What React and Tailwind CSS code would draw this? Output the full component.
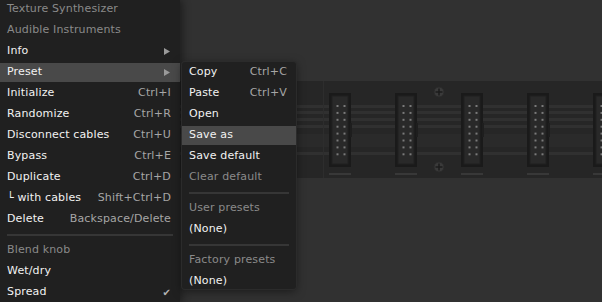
import React from "react";

const FONT = { fontFamily: '"DejaVu Sans", "Liberation Sans", sans-serif' };

const MAIN_ITEMS = [
  { label: "Texture Synthesizer", dim: true },
  { label: "Audible Instruments", dim: true },
  { label: "Info", arrow: true },
  { label: "Preset", arrow: true, active: true },
  { label: "Initialize", key: "Ctrl+I" },
  { label: "Randomize", key: "Ctrl+R" },
  { label: "Disconnect cables", key: "Ctrl+U" },
  { label: "Bypass", key: "Ctrl+E" },
  { label: "Duplicate", key: "Ctrl+D" },
  { label: "└ with cables", key: "Shift+Ctrl+D" },
  { label: "Delete", key: "Backspace/Delete" },
  { sep: true },
  { label: "Blend knob", dim: true },
  { label: "Wet/dry" },
  { label: "Spread", check: true },
];

const PRESET_ITEMS = [
  { label: "Copy", key: "Ctrl+C" },
  { label: "Paste", key: "Ctrl+V" },
  { label: "Open" },
  { label: "Save as", active: true },
  { label: "Save default" },
  { label: "Clear default", dim: true },
  { sep: true },
  { label: "User presets", dim: true },
  { label: "(None)" },
  { sep: true },
  { label: "Factory presets", dim: true },
  { label: "(None)" },
];

function Arrow() {
  return (
    <svg width="6" height="7" viewBox="0 0 6 7" className="mr-[1px]">
      <polygon points="0,0 6,3.5 0,7" fill="#9a9a9a" />
    </svg>
  );
}

function MenuRow({ item }) {
  if (item.sep) {
    return (
      <div className="h-[10px] flex items-center px-[7px]">
        <div className="h-[2px] w-full bg-[#363636]" />
      </div>
    );
  }
  return (
    <div className="h-[21px] py-[1px]">
      <div
        className={`h-full flex items-center justify-between pl-[7px] pr-[9px] ${
          item.active ? "bg-[#494949]" : ""
        }`}
      >
        <span className={item.dim ? "text-[#8a8a8a]" : "text-[#f2f2f2]"}>{item.label}</span>
        {item.key && <span className="text-[#a6a6a6]">{item.key}</span>}
        {item.arrow && <Arrow />}
        {item.check && <span className="text-[#b4b4b4] text-[10px]">✔</span>}
      </div>
    </div>
  );
}

function Connector({ x }) {
  const pins = [];
  for (let i = 0; i < 8; i++) {
    const y = 24 + i * 6.9;
    pins.push(<rect key={`a${i}`} x={x + 7.5} y={y} width="2" height="2" fill="#7a7a7a" />);
    pins.push(<rect key={`b${i}`} x={x + 14.5} y={y} width="2" height="2" fill="#7a7a7a" />);
  }
  return (
    <g>
      <rect x={x} y="12" width="22" height="74" fill="#1a1a1a" />
      <rect x={x + 3} y="15" width="16" height="68" fill="#292929" stroke="#202020" strokeWidth="1" />
      <rect x={x + 21} y="42" width="2" height="14" fill="#1e1e1e" />
      {pins}
      <rect x={x} y="92" width="22" height="2" fill="#383838" />
    </g>
  );
}

function Screw({ y }) {
  return (
    <g>
      <circle cx="439" cy={y} r="5" fill="#3a3a3a" stroke="#2a2a2a" />
      <rect x="435.5" y={y - 0.75} width="7" height="1.5" fill="#1c1c1c" />
      <rect x="438.25" y={y - 3.5} width="1.5" height="7" fill="#1c1c1c" />
    </g>
  );
}

function RackStrip() {
  return (
    <svg width="602" height="97" viewBox="0 0 602 97" className="block">
      <rect width="602" height="97" fill="#262626" />
      <rect y="53" width="602" height="13" fill="#2a2a2a" />
      {[24, 30, 37, 44, 71].map((y) => (
        <rect key={y} y={y} width="602" height="3" fill="#303030" />
      ))}
      <rect x="323" width="1" height="97" fill="#2d2d2d" />
      {[329, 395, 461, 527, 593].map((x) => (
        <Connector key={x} x={x} />
      ))}
      <Screw y={11} />
      <Screw y={86} />
    </svg>
  );
}

export default function App() {
  return (
    <div
      className="relative w-[602px] h-[302px] overflow-hidden bg-[#313131] text-[11px] tracking-[0.15px]"
      style={FONT}
    >
      <div className="pt-[81px]">
        <RackStrip />
      </div>

      <div className="absolute left-0 top-0 bottom-0 w-[180px] bg-[#202020] shadow-[2px_0_8px_rgba(0,0,0,0.45)]">
        <div className="mt-[-1px] flex flex-col">
          {MAIN_ITEMS.map((item, i) => (
            <MenuRow key={i} item={item} />
          ))}
        </div>
      </div>

      <div className="absolute left-[182px] top-[62px] w-[114px] h-[227px] overflow-hidden rounded-[3px] bg-[#202020] ring-1 ring-[#2b2b2b] shadow-[0_2px_10px_rgba(0,0,0,0.5)]">
        <div className="flex flex-col">
          {PRESET_ITEMS.map((item, i) => (
            <MenuRow key={i} item={item} />
          ))}
        </div>
      </div>
    </div>
  );
}
